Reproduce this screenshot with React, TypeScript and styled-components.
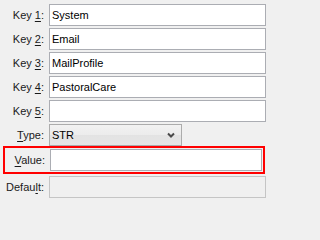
import { FC, ReactNode } from "react";
import styled, { createGlobalStyle } from "styled-components";

const GlobalStyle = createGlobalStyle`
  html, body {
    margin: 0;
    padding: 0;
    background: #f0f0f0;
  }
  body {
    font-family: "Liberation Sans", Arial, sans-serif;
    font-size: 11px;
    color: #000;
  }
`;

const Form = styled.div`
  width: 266px;
  height: 202px;
  box-sizing: border-box;
  padding-top: 4px;
  display: flex;
  flex-direction: column;
  gap: 2px;
  background: #f0f0f0;
`;

const Row = styled.div<{ $highlight?: boolean }>`
  display: grid;
  grid-template-columns: ${(p) => (p.$highlight ? "39px" : "44px")} 1fr;
  column-gap: 5px;
  align-items: center;
  ${(p) =>
    p.$highlight
      ? `
    margin: -2px 1px 0 3px;
    border: 2px solid #ff0000;
    padding: 1px;
  `
      : ""}
`;

const Label = styled.label`
  text-align: right;
  white-space: nowrap;
  color: #1a1a1a;
  u {
    text-decoration-thickness: 1px;
    text-underline-offset: 2px;
  }
`;

const TextBox = styled.input`
  box-sizing: border-box;
  width: 100%;
  height: 22px;
  margin: 0;
  padding: 0 2px;
  border: 1px solid #abadb3;
  background: ${(p) => (p.disabled ? "#f0f0f0" : "#fff")};
  border-color: ${(p) => (p.disabled ? "#c5c5c5" : "#abadb3")};
  font: inherit;
  color: #000;
  outline: none;
`;

const Combo = styled.div`
  box-sizing: border-box;
  width: 133px;
  height: 22px;
  display: flex;
  align-items: center;
  justify-content: space-between;
  padding: 0 6px 0 2px;
  border: 1px solid #acacac;
  background: linear-gradient(#f2f2f2 0%, #ececec 50%, #e3e3e3 51%, #e6e6e6 100%);
`;

const Chevron = () => (
  <svg width="8" height="6" viewBox="0 0 8 6">
    <path d="M1 1.5 L4 4.5 L7 1.5" fill="none" stroke="#4a4a4a" strokeWidth="2" />
  </svg>
);

const Field: FC<{ label: ReactNode; children: ReactNode; highlight?: boolean }> = ({
  label,
  children,
  highlight,
}) => (
  <Row $highlight={highlight}>
    <Label>{label}</Label>
    {children}
  </Row>
);

const keys = ["System", "Email", "MailProfile", "PastoralCare", ""];

const App: FC = () => {
  return (
    <>
      <GlobalStyle />
      <Form>
        {keys.map((k, i) => (
          <Field
            key={i}
            label={
              <>
                Key <u>{i + 1}</u>:
              </>
            }
          >
            <TextBox defaultValue={k} />
          </Field>
        ))}
        <Field
          label={
            <>
              <u>T</u>ype:
            </>
          }
        >
          <Combo>
            <span>STR</span>
            <Chevron />
          </Combo>
        </Field>
        <Field
          highlight
          label={
            <>
              <u>V</u>alue:
            </>
          }
        >
          <TextBox defaultValue="" />
        </Field>
        <Field
          label={
            <>
              Defau<u>l</u>t:
            </>
          }
        >
          <TextBox disabled defaultValue="" />
        </Field>
      </Form>
    </>
  );
};

export default App;
